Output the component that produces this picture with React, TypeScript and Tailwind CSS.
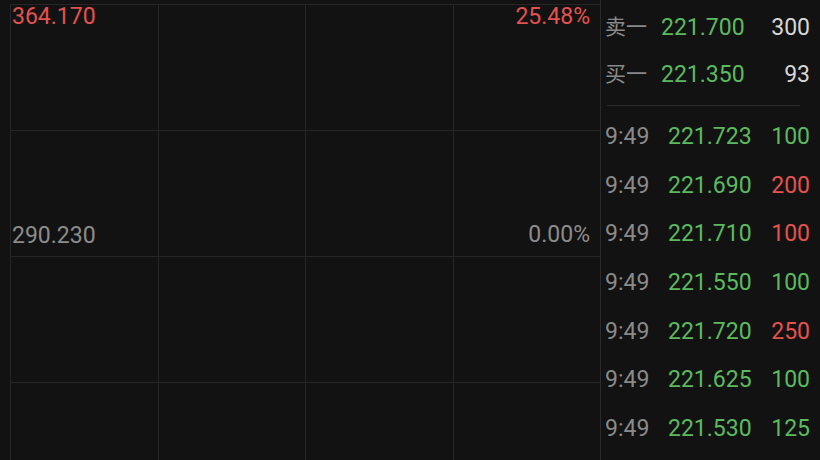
import React from 'react';

type Tick = { time: string; price: string; vol: string; up: boolean };

const quotes = [
  { label: '卖一', price: '221.700', vol: '300' },
  { label: '买一', price: '221.350', vol: '93' },
];

const ticks: Tick[] = [
  { time: '9:49', price: '221.723', vol: '100', up: false },
  { time: '9:49', price: '221.690', vol: '200', up: true },
  { time: '9:49', price: '221.710', vol: '100', up: true },
  { time: '9:49', price: '221.550', vol: '100', up: false },
  { time: '9:49', price: '221.720', vol: '250', up: true },
  { time: '9:49', price: '221.625', vol: '100', up: false },
  { time: '9:49', price: '221.530', vol: '125', up: false },
];

const font = { fontFamily: 'Roboto, "Noto Sans CJK SC", sans-serif' };

function ChartGrid() {
  const cells = Array.from({ length: 16 });
  return (
    <div className="relative w-[600px] h-[460px] shrink-0 overflow-hidden pl-[10px] pt-[4px]">
      <div className="grid grid-cols-4 auto-rows-[126px] border-t border-[#262626]">
        {cells.map((_, i) => (
          <div key={i} className="border-l border-b border-[#262626]" />
        ))}
      </div>

      <span className="absolute left-[12px] top-[3px] text-[23px] leading-[27px] text-[#e2534f]">364.170</span>
      <span className="absolute right-[10px] top-[3px] text-[23px] leading-[27px] text-[#e2534f]">25.48%</span>
      <span className="absolute left-[12px] top-[222px] text-[23px] leading-[27px] text-[#8c8c8c]">290.230</span>
      <span className="absolute right-[10px] top-[221px] text-[23px] leading-[27px] text-[#8c8c8c]">0.00%</span>
    </div>
  );
}

function TradePanel() {
  return (
    <div className="flex-1 h-[460px] border-l border-[#2a2a2a] pt-[4px] text-[23px] leading-[27px]">
      {quotes.map(q => (
        <div key={q.label} className="flex items-center h-[47px] pl-[4px] pr-[10px]">
          <span className="w-[56px] text-[21px] text-[#8a8a8a]">{q.label}</span>
          <span className="text-[#5cba5e]">{q.price}</span>
          <span className="flex-1 text-right text-[#d6d6d6]">{q.vol}</span>
        </div>
      ))}

      <div className="ml-[6px] mr-[20px] mt-[7px] h-px bg-[#2c2c2c]" />

      <div className="mt-[6px]">
        {ticks.map((t, i) => (
          <div key={i} className="flex items-center h-[48.7px] pl-[4px] pr-[10px]">
            <span className="w-[63px] text-[#8a8a8a]">{t.time}</span>
            <span className="text-[#5cba5e]">{t.price}</span>
            <span className={t.up ? 'flex-1 text-right text-[#e2534f]' : 'flex-1 text-right text-[#5cba5e]'}>
              {t.vol}
            </span>
          </div>
        ))}
      </div>
    </div>
  );
}

export default function App() {
  return (
    <div className="flex w-[820px] h-[460px] overflow-hidden bg-[#121212]" style={font}>
      <ChartGrid />
      <TradePanel />
    </div>
  );
}
